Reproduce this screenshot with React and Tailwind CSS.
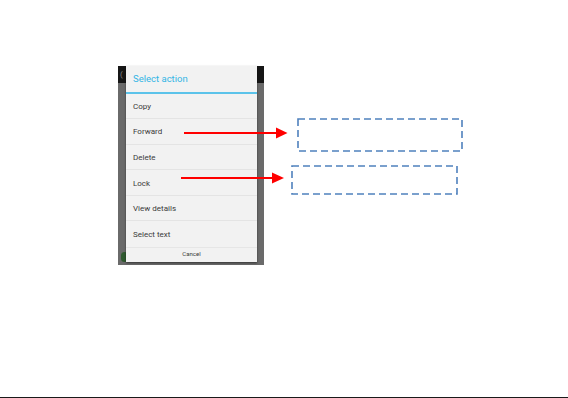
export default function App() {
  const items = ["Copy", "Forward", "Delete", "Lock", "View details", "Select text"];
  return (
    <div className="relative w-[568px] h-[398px] bg-white overflow-hidden" style={{ fontFamily: "Roboto, 'Liberation Sans', sans-serif" }}>
      <div className="pt-[66px] pl-[118px]">
        <div className="relative w-[146px] h-[199px] bg-[#6a6a6a]">
          <div className="h-[17px] bg-[#161616] flex items-center pl-[2px] text-[8px] text-[#888]">(</div>
          <div className="absolute left-[3px] top-[186px] w-[7px] h-[10px] rounded-full bg-[#2f5a2f]" />
          <div className="absolute left-[8px] top-0 w-[131px] h-[196px] bg-[#f2f2f2] shadow-[0_1px_2px_rgba(0,0,0,0.5)] flex flex-col">
            <div className="h-[26px] flex items-center pl-[7px] text-[9.5px] text-[#33b5e5]">Select action</div>
            <div className="h-[1.5px] bg-[#5bc3ea]" />
            {items.map((t, i) => (
              <div key={t} className={"h-[25.6px] flex items-center pl-[7px] pt-[2px] text-[8px] text-[#3a3a3a] " + (i < items.length - 1 ? "border-b border-[#e4e4e4]" : "")}>
                {t}
              </div>
            ))}
            <div className="flex-1 flex items-center justify-center pb-[3px] text-[6px] text-[#3a3a3a] border-t border-[#e6e6e6]">Cancel</div>
          </div>
        </div>
      </div>
      <svg className="absolute left-0 top-0" width="568" height="398">
        <line x1="184" y1="133" x2="278" y2="133" stroke="#ff0000" strokeWidth="2" />
        <polygon points="276,127.5 287.5,133 276,138.5" fill="#ff0000" />
        <line x1="181" y1="178" x2="274" y2="178" stroke="#ff0000" strokeWidth="2" />
        <polygon points="272,172.5 284,178 272,183.5" fill="#ff0000" />
        <rect x="298" y="119" width="164" height="32" fill="none" stroke="#4f81bd" strokeWidth="1.6" strokeDasharray="7 4" />
        <rect x="292" y="166" width="165" height="28" fill="none" stroke="#4f81bd" strokeWidth="1.6" strokeDasharray="7 4" />
      </svg>
      <div className="absolute left-0 bottom-0 w-full h-px bg-[#1a1a1a]" />
    </div>
  );
}
